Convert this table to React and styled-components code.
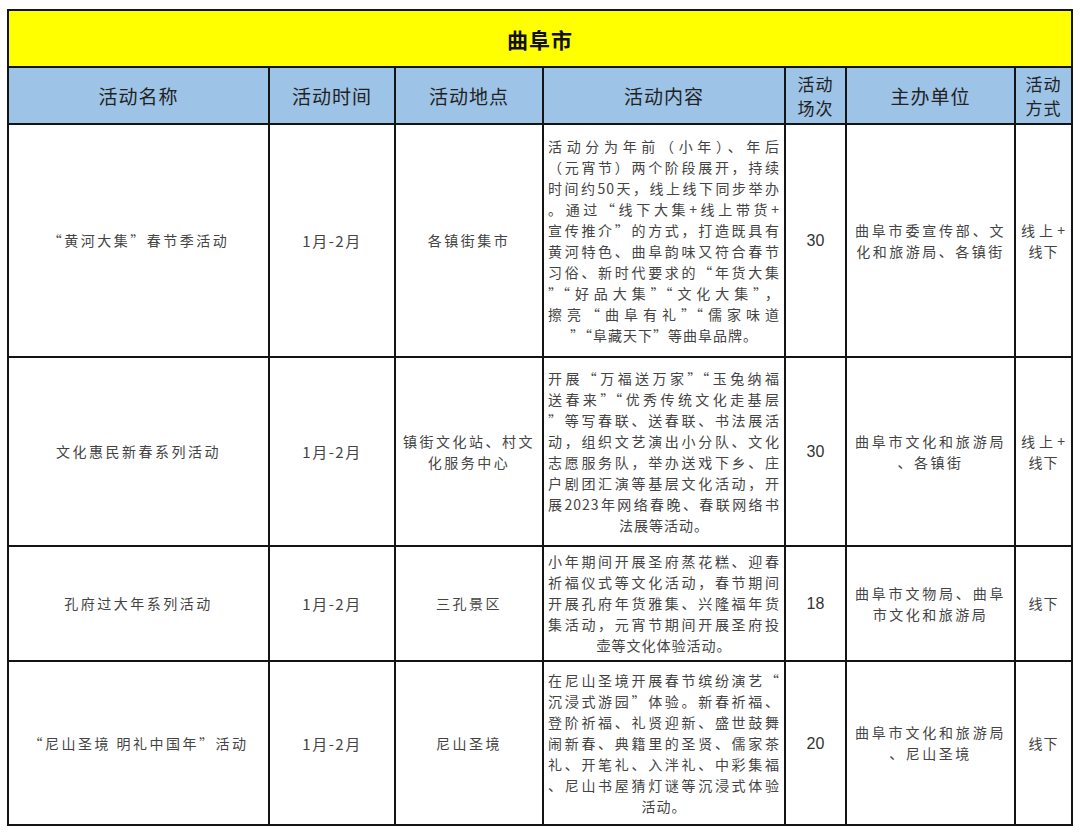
import React from 'react';
import styled, {createGlobalStyle} from 'styled-components';

const GlobalStyle = createGlobalStyle`
  html, body {
    margin: 0;
    padding: 0;
    background: #ffffff;
  }
  body {
    font-family: "Noto Sans CJK SC", "Noto Sans", sans-serif;
  }
`;

const Page = styled.div`
  padding: 9px 0 0 7px;
`;

// grid background shows through the gaps as the black cell borders
const Sheet = styled.div`
  display: grid;
  grid-template-columns: 259px 124px 146px 240px 59px 167px 55px;
  grid-template-rows: 55px 55px 231px 187px 113px 162px;
  gap: 2px;
  padding: 2px;
  background: #141414;
  width: max-content;
`;

const TitleCell = styled.div`
  grid-column: 1 / -1;
  background: #ffff00;
  display: flex;
  align-items: center;
  justify-content: center;
  font-size: 21px;
  font-weight: 700;
  color: #111;
  letter-spacing: 1px;
`;

const HeadCell = styled.div`
  background: #9dc3e6;
  display: flex;
  flex-direction: column;
  align-items: center;
  justify-content: center;
  text-align: center;
  font-size: 19px;
  color: #222;
  letter-spacing: 1px;
`;

const HeadLine = styled.span`
  display: block;
  font-size: 17px;
  line-height: 24px;
  height: 24px;
`;

const Cell = styled.div`
  background: #fff;
  display: flex;
  align-items: center;
  justify-content: center;
  text-align: center;
  padding: 0 ${(props) => props.$pad || 0}px;
  font-size: 14px;
  line-height: 21px;
  color: #444;
  letter-spacing: ${(props) => (props.$spacing !== undefined ? props.$spacing : 2.5)}px;
`;

const Number = styled.span`
  font-family: "Liberation Sans", "Noto Sans", sans-serif;
  font-size: 16px;
  color: #333;
  letter-spacing: 0;
`;

const DateText = styled.span`
  font-size: 15px;
  color: #444;
  letter-spacing: 1.5px;
`;

const Para = styled.div`
  width: 100%;
`;

const Line = styled.div`
  text-align: ${(props) => (props.$justify ? 'justify' : 'center')};
  text-align-last: ${(props) => (props.$justify ? 'justify' : 'center')};
  white-space: nowrap;
`;

const Lines = ({lines}) => (
  <Para>
    {lines.map((line, index) => (
      <Line key={index} $justify={index < lines.length - 1}>{line}</Line>
    ))}
  </Para>
);

const headers = [
  ['活动名称'],
  ['活动时间'],
  ['活动地点'],
  ['活动内容'],
  ['活动', '场次'],
  ['主办单位'],
  ['活动', '方式'],
];

const rows = [
  {
    name: '“黄河大集”春节季活动',
    place: ['各镇街集市'],
    content: [
      '活动分为年前（小年）、年后',
      '（元宵节）两个阶段展开，持续',
      '时间约50天，线上线下同步举办',
      '。通过“线下大集+线上带货+',
      '宣传推介”的方式，打造既具有',
      '黄河特色、曲阜韵味又符合春节',
      '习俗、新时代要求的“年货大集',
      '”“好品大集”“文化大集”，',
      '擦亮“曲阜有礼”“儒家味道',
      '”“阜藏天下”等曲阜品牌。',
    ],
    count: '30',
    host: ['曲阜市委宣传部、文', '化和旅游局、各镇街'],
    mode: ['线上+', '线下'],
  },
  {
    name: '文化惠民新春系列活动',
    place: ['镇街文化站、村文', '化服务中心'],
    content: [
      '开展“万福送万家”“玉兔纳福',
      '送春来”“优秀传统文化走基层',
      '”等写春联、送春联、书法展活',
      '动，组织文艺演出小分队、文化',
      '志愿服务队，举办送戏下乡、庄',
      '户剧团汇演等基层文化活动，开',
      '展2023年网络春晚、春联网络书',
      '法展等活动。',
    ],
    count: '30',
    host: ['曲阜市文化和旅游局', '、各镇街'],
    mode: ['线上+', '线下'],
  },
  {
    name: '孔府过大年系列活动',
    place: ['三孔景区'],
    content: [
      '小年期间开展圣府蒸花糕、迎春',
      '祈福仪式等文化活动，春节期间',
      '开展孔府年货雅集、兴隆福年货',
      '集活动，元宵节期间开展圣府投',
      '壶等文化体验活动。',
    ],
    count: '18',
    host: ['曲阜市文物局、曲阜', '市文化和旅游局'],
    mode: ['线下'],
  },
  {
    name: '“尼山圣境 明礼中国年”活动',
    place: ['尼山圣境'],
    content: [
      '在尼山圣境开展春节缤纷演艺“',
      '沉浸式游园”体验。新春祈福、',
      '登阶祈福、礼贤迎新、盛世鼓舞',
      '闹新春、典籍里的圣贤、儒家茶',
      '礼、开笔礼、入泮礼、中彩集福',
      '、尼山书屋猜灯谜等沉浸式体验',
      '活动。',
    ],
    count: '20',
    host: ['曲阜市文化和旅游局', '、尼山圣境'],
    mode: ['线下'],
  },
];

const App = () => {
  return (
    <Page>
      <GlobalStyle />
      <Sheet>
        <TitleCell>曲阜市</TitleCell>
        {headers.map((label, index) => (
          <HeadCell key={index}>
            {label.length > 1
              ? label.map((part) => <HeadLine key={part}>{part}</HeadLine>)
              : label[0]}
          </HeadCell>
        ))}
        {rows.map((row, index) => (
          <React.Fragment key={index}>
            <Cell>{row.name}</Cell>
            <Cell><DateText>1月-2月</DateText></Cell>
            <Cell $pad={7}><Lines lines={row.place} /></Cell>
            <Cell $pad={4} $spacing={1}><Lines lines={row.content} /></Cell>
            <Cell><Number>{row.count}</Number></Cell>
            <Cell $pad={8}><Lines lines={row.host} /></Cell>
            <Cell $pad={5} $spacing={1}><Lines lines={row.mode} /></Cell>
          </React.Fragment>
        ))}
      </Sheet>
    </Page>
  );
};

export default App;
